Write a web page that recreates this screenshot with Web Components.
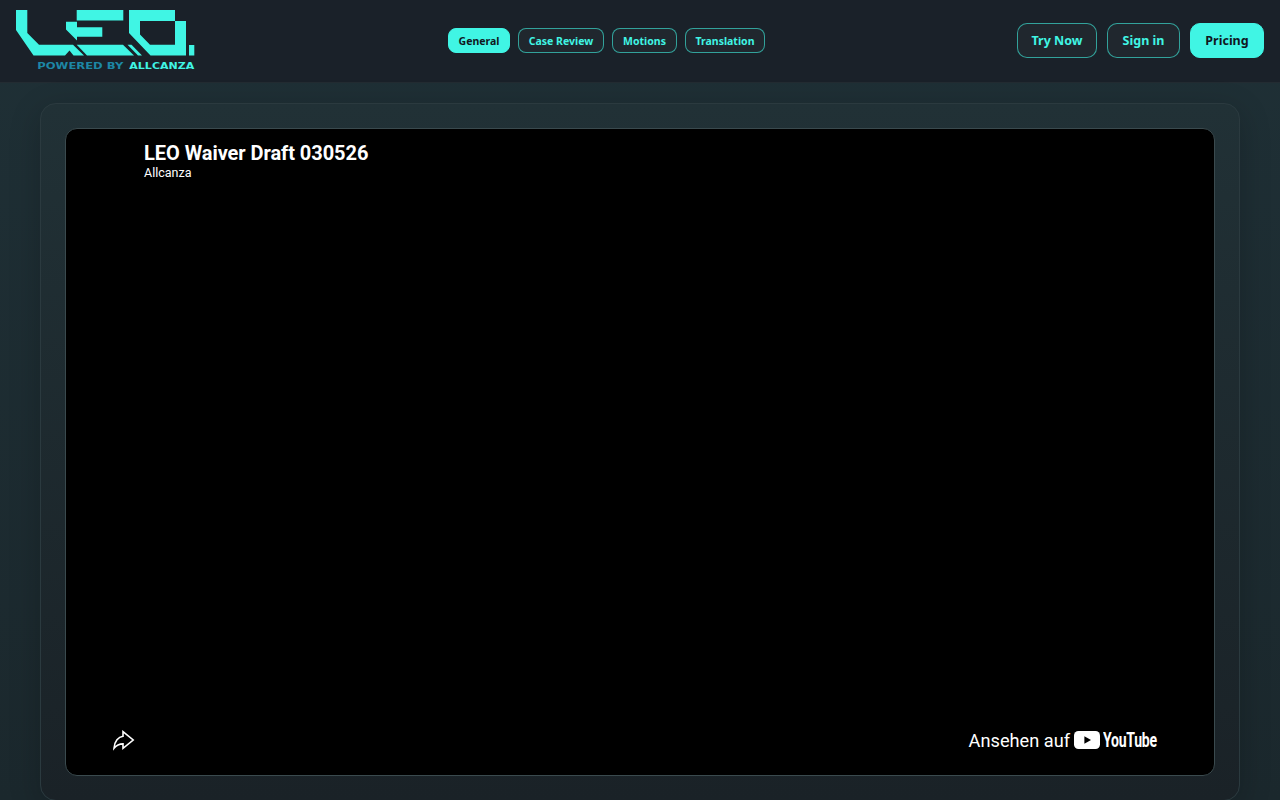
<!DOCTYPE html>
<html>
<head>
<meta charset="utf-8">
<title>LEO</title>
<style>
  html, body {
    margin: 0;
    height: 100%;
    overflow: hidden;
    background: #1a2229;
  }
</style>
</head>
<body>
<leo-app></leo-app>

<script>
class LeoButton extends HTMLElement {
  constructor() {
    super();
    this.shadowDOM = this.attachShadow({mode: 'open'});
    this.shadowDOM.innerHTML = `
      <style>
        :host {
          box-sizing: border-box;
          height: 35px;
          display: flex;
          align-items: center;
          justify-content: center;
          border: 1px solid rgba(64, 245, 228, 0.6);
          border-radius: 10px;
          background: #20272e;
          color: #40f5e4;
          font: 700 12.5px "Noto Sans", sans-serif;
          white-space: nowrap;
        }
        :host([small]) {
          height: 25px;
          border-radius: 8px;
          font-size: 10.5px;
        }
        :host([active]) {
          background: #40f5e4;
          border-color: #40f5e4;
          color: #10181f;
        }
      </style>
      <slot></slot>
    `;
  }
}

class LeoLogo extends HTMLElement {
  constructor() {
    super();
    this.shadowDOM = this.attachShadow({mode: 'open'});
    this.shadowDOM.innerHTML = `
      <style>
        :host {
          display: block;
          width: 180px;
          height: 61px;
        }
        svg { display: block; }
        text {
          font: 700 9.5px "DejaVu Sans", sans-serif;
        }
      </style>
      <svg width="180" height="60" viewBox="16 10 180 60">
        <g fill="#40f5e4">
          <polygon points="16,10 27.3,10 27.3,33 39,44.7 73,44.7 84,55.5 73.5,55.5 69.5,50.5 65,55.5 33.5,55.5 16,30"/>
          <rect x="76.7" y="10" width="46.6" height="10.5"/>
          <polygon points="66,21.7 77,21.7 77,27.3 102.3,27.3 102.3,36.7 77,36.7 77,40.5 66,29.5"/>
          <polygon points="76.7,44.7 123,44.7 134,55.5 87,55.5"/>
          <polygon points="127.5,44.7 131.5,44.7 142,55.5 138,55.5"/>
          <path fill-rule="evenodd" d="M129 10H175V21H186V55.5H150.5L129 33ZM140 21V34.5L150 44.7H175V21Z"/>
          <rect x="189" y="45" width="5.3" height="10.5"/>
        </g>
        <text x="37.3" y="69.2" fill="#1d87a5" textLength="86" lengthAdjust="spacingAndGlyphs">POWERED BY</text>
        <text x="129.3" y="69.2" fill="#40f5e4" textLength="65" lengthAdjust="spacingAndGlyphs">ALLCANZA</text>
      </svg>
    `;
  }
}

class LeoHeader extends HTMLElement {
  constructor() {
    super();
    this.shadowDOM = this.attachShadow({mode: 'open'});
    this.shadowDOM.innerHTML = `
      <style>
        :host {
          display: flex;
          justify-content: space-between;
          align-items: center;
          height: 83px;
          padding: 0 16px 1px;
          box-sizing: border-box;
          background: #1a2129;
          border-bottom: 1px solid #232c32;
        }
        nav {
          display: flex;
          gap: 8px;
        }
        .actions {
          display: flex;
          gap: 10px;
        }
      </style>
      <leo-logo></leo-logo>
      <nav>
        <leo-button small active style="width:62px">General</leo-button>
        <leo-button small style="width:86px">Case Review</leo-button>
        <leo-button small style="width:65px">Motions</leo-button>
        <leo-button small style="width:80px">Translation</leo-button>
      </nav>
      <div class="actions">
        <leo-button style="width:80px">Try Now</leo-button>
        <leo-button style="width:73px">Sign in</leo-button>
        <leo-button active style="width:74px">Pricing</leo-button>
      </div>
    `;
  }
}

class VideoPlayer extends HTMLElement {
  constructor() {
    super();
    this.shadowDOM = this.attachShadow({mode: 'open'});
    this.shadowDOM.innerHTML = `
      <style>
        :host {
          display: flex;
          flex-direction: column;
          justify-content: space-between;
          height: 648px;
          box-sizing: border-box;
          padding: 12px 57px 23px 78px;
          background: #000;
          border: 1px solid #3a4a4e;
          border-radius: 12px;
          color: #fff;
          font-family: Roboto, sans-serif;
        }
        h1 {
          margin: 0;
          font-size: 20px;
          line-height: 24px;
          font-weight: 700;
          letter-spacing: -0.05px;
        }
        .channel {
          font-size: 12.5px;
          line-height: 16px;
        }
        .bottom {
          display: flex;
          justify-content: space-between;
          align-items: center;
          margin-left: -32px;
        }
        .watch {
          display: flex;
          align-items: center;
          gap: 4px;
          font-size: 18.2px;
        }
        .yt {
          display: flex;
          align-items: center;
          gap: 3px;
        }
        .word {
          display: inline-block;
          font-weight: 700;
          font-size: 21px;
          line-height: 24px;
          letter-spacing: -0.4px;
          transform: scaleX(0.67);
          transform-origin: left center;
          width: 54px;
        }
        svg { display: block; }
      </style>
      <div>
        <h1>LEO Waiver Draft 030526</h1>
        <div class="channel">Allcanza</div>
      </div>
      <div class="bottom">
        <svg width="24" height="24" viewBox="0 0 24 24" fill="none" stroke="#fff" stroke-width="1.6" stroke-linejoin="miter">
          <path d="M11 3.6 L21.2 12 L11 20.4 V15.9 C7 15.9 4.5 17.2 2 20.3 C2.4 13 6.5 8.8 11 8.2 Z"/>
        </svg>
        <div class="watch">
          <span>Ansehen auf</span>
          <div class="yt">
            <svg width="26" height="18" viewBox="0 0 26 18">
              <rect width="26" height="18" rx="4.5" fill="#fff"/>
              <polygon points="10.4,5.2 17,9 10.4,12.8" fill="#000"/>
            </svg>
            <span class="word">YouTube</span>
          </div>
        </div>
      </div>
    `;
  }
}

class LeoApp extends HTMLElement {
  constructor() {
    super();
    this.shadowDOM = this.attachShadow({mode: 'open'});
    this.shadowDOM.innerHTML = `
      <style>
        :host {
          display: block;
          height: 800px;
          overflow: hidden;
          background: linear-gradient(180deg, #1f3036 0%, #1b282d 100%);
        }
        main {
          padding: 20px 40px 0;
        }
        .card {
          padding: 24px;
          border: 1px solid #2b3a3f;
          border-radius: 16px;
          background: linear-gradient(180deg, #213136 0%, #1a2227 100%);
          box-shadow: 0 8px 32px rgba(0, 0, 0, 0.2);
        }
      </style>
      <leo-header></leo-header>
      <main>
        <div class="card">
          <video-player></video-player>
        </div>
      </main>
    `;
  }
}

customElements.define('leo-button', LeoButton);
customElements.define('leo-logo', LeoLogo);
customElements.define('leo-header', LeoHeader);
customElements.define('video-player', VideoPlayer);
customElements.define('leo-app', LeoApp);
</script>
</body>
</html>
